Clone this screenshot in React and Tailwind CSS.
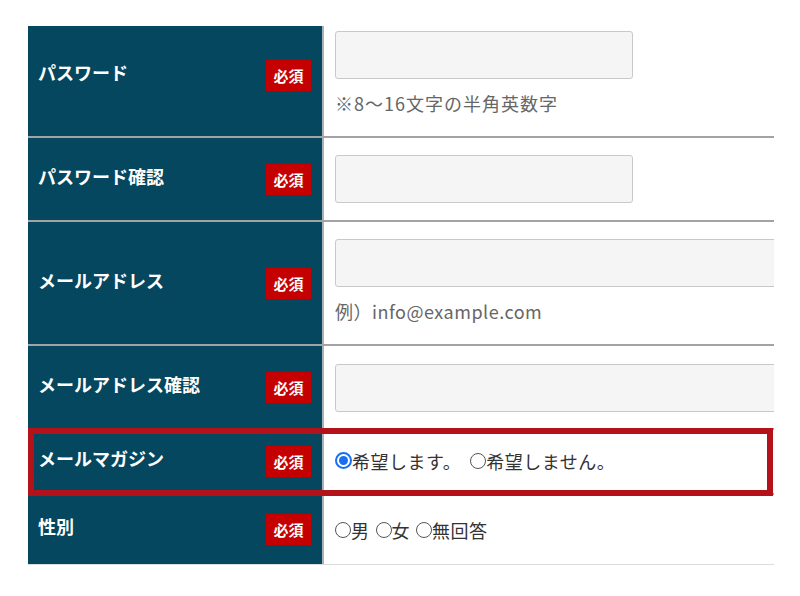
const FONT = { fontFamily: '"Noto Sans CJK JP", "Noto Sans", sans-serif' };

function Badge() {
  return (
    <span className="shrink-0 flex items-center justify-center w-[45px] h-[31px] bg-[#c50000] text-white text-[15px] font-bold leading-none">
      必須
    </span>
  );
}

function Label({ text, className = "" }) {
  return (
    <div
      className={`w-[296px] shrink-0 bg-[#04475e] border-r-2 border-[#a9b2b6] flex items-center justify-between pl-[10px] pr-[11px] ${className}`}
    >
      <span className="text-white text-[18px] font-bold leading-[24px] mb-[7px]">{text}</span>
      <Badge />
    </div>
  );
}

function Input({ wide }) {
  return (
    <div
      className={`${wide ? "w-[470px]" : "w-[298px]"} h-[48px] shrink-0 bg-[#f5f5f5] border border-[#c9c9c9] rounded-[3px]`}
    />
  );
}

function Radio({ checked, label }) {
  return (
    <span className="inline-flex items-center">
      {checked ? (
        <span className="w-[17px] h-[17px] rounded-full border-2 border-[#1a6ff0] bg-white flex items-center justify-center">
          <span className="w-[9px] h-[9px] rounded-full bg-[#1a6ff0]" />
        </span>
      ) : (
        <span className="w-[16px] h-[16px] rounded-full border border-[#555] bg-white" />
      )}
      <span className="text-[18px] text-[#333] leading-[24px] tracking-[0.5px]">{label}</span>
    </span>
  );
}

function Row({ label, children, labelClass = "", border = "border-b-2 border-[#a3a3a3]", h = "" }) {
  return (
    <div className={`flex ${border} ${h}`}>
      <Label text={label} className={labelClass} />
      <div className="flex-1 min-w-0 overflow-hidden pl-[11px]">{children}</div>
    </div>
  );
}

export default function App() {
  return (
    <div className="w-[800px] h-[596px] bg-white pt-[26px] pl-[28px]" style={FONT}>
      <div className="w-[746px] overflow-hidden flex flex-col">
        <Row label="パスワード" labelClass="pb-[12px]">
          <div className="pt-[5px] pb-[23px]">
            <Input />
            <p className="mt-[14px] text-[18px] leading-[20px] text-[#666] tracking-[1px]">※8〜16文字の半角英数字</p>
          </div>
        </Row>

        <Row label="パスワード確認">
          <div className="py-[17px]">
            <Input />
          </div>
        </Row>

        <Row label="メールアドレス">
          <div className="pt-[17px] pb-[23px]">
            <Input wide />
            <p className="mt-[14px] text-[18px] leading-[20px] text-[#666] tracking-[0.5px]">例）info@example.com</p>
          </div>
        </Row>

        <Row label="メールアドレス確認">
          <div className="pt-[18px] pb-[16px]">
            <Input wide />
          </div>
        </Row>

        <div className="relative">
          <Row label="メールマガジン" h="h-[65px]">
            <div className="h-full flex items-center pb-[2px]">
              <Radio checked label="希望します。" />
              <span className="w-[9px]" />
              <Radio label="希望しません。" />
            </div>
          </Row>
          <div className="absolute -top-[2px] -bottom-[1px] left-0 right-[1px] border-[6px] border-[#b3121a] pointer-events-none" />
        </div>

        <Row label="性別" border="border-b border-[#dcdcdc]" h="h-[70px]">
          <div className="h-full flex items-center gap-[6px]">
            <Radio label="男" />
            <Radio label="女" />
            <Radio label="無回答" />
          </div>
        </Row>
      </div>
    </div>
  );
}
